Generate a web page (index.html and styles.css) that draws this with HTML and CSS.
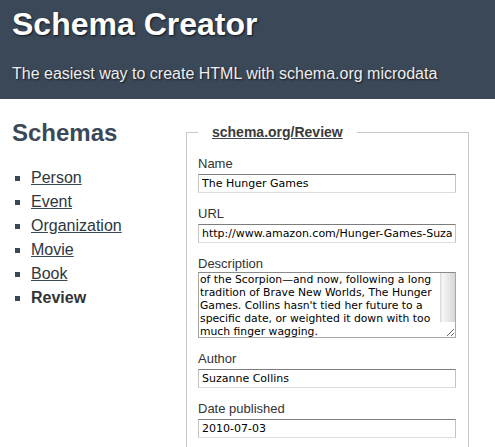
FILE: index.html
```html
<!DOCTYPE html>
<html lang="en">
<head>
    <meta charset="UTF-8">
    <meta name="viewport" content="width=device-width, initial-scale=1.0">
    <title>Schema Creator</title>
    <link rel="stylesheet" href="styles.css">
</head>
<body>
    <header class="site-header">
        <h1>Schema Creator</h1>
        <p class="tagline">The easiest way to create HTML with schema.org microdata</p>
    </header>

    <div class="page">
        <nav class="sidebar">
            <h2>Schemas</h2>
            <ul class="schema-list">
                <li><a href="#person">Person</a></li>
                <li><a href="#event">Event</a></li>
                <li><a href="#organization">Organization</a></li>
                <li><a href="#movie">Movie</a></li>
                <li><a href="#book">Book</a></li>
                <li class="current">Review</li>
            </ul>
        </nav>

        <form class="schema-form">
            <fieldset>
                <legend><a href="#review">schema.org/Review</a></legend>

                <div class="field">
                    <label for="name">Name</label>
                    <input type="text" id="name" value="The Hunger Games">
                </div>
                <div class="field">
                    <label for="url">URL</label>
                    <input type="text" id="url" value="http://www.amazon.com/Hunger-Games-Suzanne-Collins/dp/0439023483">
                </div>
                <div class="field">
                    <label for="description">Description</label>
                    <textarea id="description">of the Scorpion—and now, following a long
tradition of Brave New Worlds, The Hunger
Games. Collins hasn't tied her future to a
specific date, or weighted it down with too
much finger wagging.</textarea>
                </div>
                <div class="field">
                    <label for="author">Author</label>
                    <input type="text" id="author" value="Suzanne Collins">
                </div>
                <div class="field">
                    <label for="published">Date published</label>
                    <input type="text" id="published" value="2010-07-03">
                </div>
            </fieldset>
        </form>
    </div>
</body>
</html>
```

FILE: styles.css
```css
body {
    margin: 0;
    font-family: "Liberation Sans", Arial, sans-serif;
    color: #333;
    background-color: #fff;
}
a {
    color: #2e3640;
    text-decoration-color: #3b4858;
}

/* header */
.site-header {
    background-color: #3b4858;
    color: #fff;
    padding: 6px 12px 15px;
}
.site-header h1 {
    margin: 0;
    font-size: 32px;
    line-height: 36px;
    text-shadow: 1px 1px 2px rgba(0, 0, 0, 0.7);
}
.tagline {
    margin: 22px 0 0;
    font-size: 16px;
    line-height: 20px;
    color: #eee;
    text-shadow: 1px 1px 2px rgba(0, 0, 0, 0.7);
}

/* layout */
.page {
    display: grid;
    grid-template-columns: 174px 283px;
    padding: 0 12px;
}

/* sidebar */
.sidebar h2 {
    margin: 20px 0 0;
    font-size: 24px;
    line-height: 28px;
    color: #3b4858;
}
.schema-list {
    margin: 19px 0 0;
    padding-left: 19px;
    list-style: square;
    font-size: 16px;
    line-height: 24px;
}
.schema-list li::marker {
    color: #3b4858;
}
.schema-list .current {
    font-weight: bold;
}

/* form */
.schema-form fieldset {
    box-sizing: border-box;
    width: 283px;
    min-width: 0;
    margin: 25px 0 0;
    padding: 16px 12px 0 11px;
    border: 1px solid #c8c8c8;
}
.schema-form legend {
    padding: 0 14px;
    font-size: 14px;
    line-height: 16px;
    font-weight: bold;
}
.schema-form legend a {
    color: #3a3a3a;
}
.field {
    margin-bottom: 13px;
}
.field label {
    display: block;
    font-size: 13px;
    line-height: 16px;
    color: #333;
}
.field input,
.field textarea {
    display: block;
    box-sizing: border-box;
    width: 100%;
    font-family: "DejaVu Sans", Verdana, sans-serif;
    font-size: 11px;
    color: #000;
    background-color: #fff;
    border: 1px solid;
    border-radius: 0;
    outline: none;
}
.field input {
    height: 19px;
    margin: 2px 0 0;
    padding: 0 3px;
    border-color: #7c7c7c #c3c3c3 #dddddd #c3c3c3;
}
/* the scroll track is painted as a background so it shows without overflow */
.field textarea {
    height: 66px;
    margin: 0 0 3px;
    padding: 0 15px 0 1px;
    font-size: 10.8px;
    line-height: 13px;
    border-color: #8a8a8a #a8a8a8 #a8a8a8 #a8a8a8;
    background: #fff linear-gradient(to right, #dcdcdc 0, #dcdcdc 1px, #f8f8f8 2px, #ececec 45%, #d6d6d6 100%) no-repeat right top / 15px calc(100% - 15px);
    overflow: hidden;
    resize: both;
}
```
